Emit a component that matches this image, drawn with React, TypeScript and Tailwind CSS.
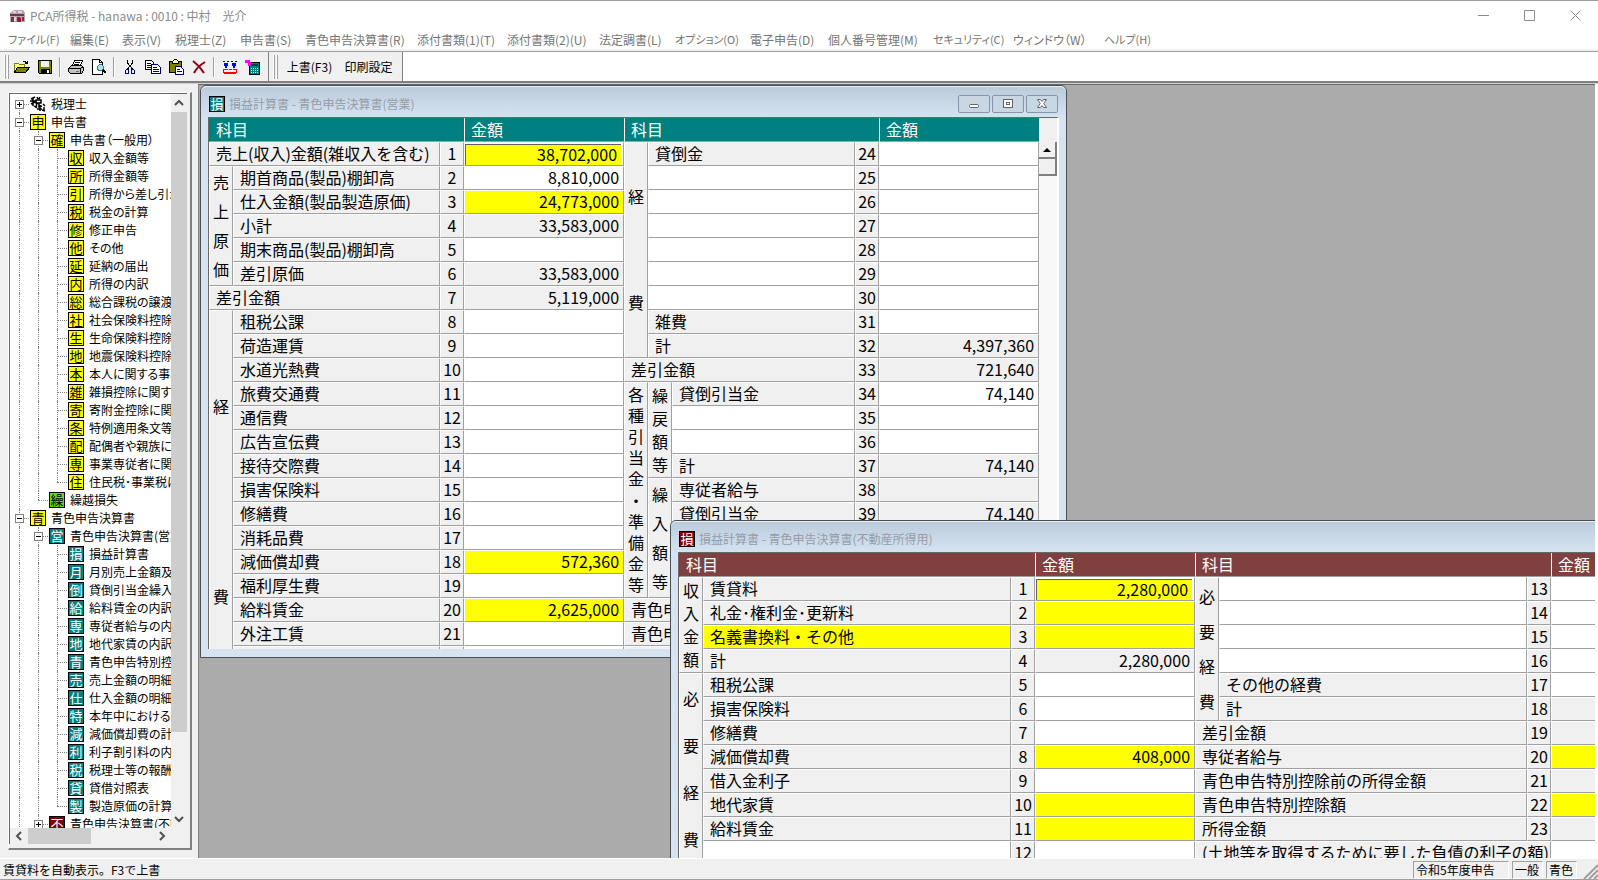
import type { ReactNode } from "react";

type Tone = "gray" | "white" | "yellow" | "edit";

type Line = {
  groups?: { text: string; rows: number }[];
  label?: string;
  labelTone?: Tone;
  span?: number;
  no?: number;
  amount?: string;
  tone?: Tone;
};

type TreeRow = {
  level: number;
  mark: string;
  label: string;
  color: string;
  node?: "+" | "-";
  last?: boolean;
};

const menus = [
  { label: "ファイル(F)", width: "w-[62px] text-[11px]" },
  { label: "編集(E)", width: "w-[52px]" },
  { label: "表示(V)", width: "w-[53px]" },
  { label: "税理士(Z)", width: "w-[65px]" },
  { label: "申告書(S)", width: "w-[65px]" },
  { label: "青色申告決算書(R)", width: "w-[112px]" },
  { label: "添付書類(1)(T)", width: "w-[90px]" },
  { label: "添付書類(2)(U)", width: "w-[92px]" },
  { label: "法定調書(L)", width: "w-[76px]" },
  { label: "オプション(O)", width: "w-[75px] text-[11px]" },
  { label: "電子申告(D)", width: "w-[78px]" },
  { label: "個人番号管理(M)", width: "w-[105px]" },
  { label: "セキュリティ(C)", width: "w-[80px] text-[11px]" },
  { label: "ウィンドウ（W）", width: "w-[91px]" },
  { label: "ヘルプ(H)", width: "w-[60px] text-[11px]" },
];

const yellow = "bg-[#ffff00] text-black";
const teal = "bg-[#008080] text-white";

const returnItems = [
  ["収", "収入金額等"],
  ["所", "所得金額等"],
  ["引", "所得から差し引かれる金額"],
  ["税", "税金の計算"],
  ["修", "修正申告"],
  ["他", "その他"],
  ["延", "延納の届出"],
  ["内", "所得の内訳"],
  ["総", "総合課税の譲渡"],
  ["社", "社会保険料控除"],
  ["生", "生命保険料控除"],
  ["地", "地震保険料控除"],
  ["本", "本人に関する事項"],
  ["雑", "雑損控除に関する事項"],
  ["寄", "寄附金控除に関する事項"],
  ["条", "特例適用条文等"],
  ["配", "配偶者や親族に関する事項"],
  ["専", "事業専従者に関する事項"],
  ["住", "住民税･事業税に関する事項"],
];

const statementItems = [
  ["損", "損益計算書"],
  ["月", "月別売上金額及び仕入金額"],
  ["倒", "貸倒引当金繰入額"],
  ["給", "給料賃金の内訳"],
  ["専", "専従者給与の内訳"],
  ["地", "地代家賃の内訳"],
  ["青", "青色申告特別控除"],
  ["売", "売上金額の明細"],
  ["仕", "仕入金額の明細"],
  ["特", "本年中における特殊事情"],
  ["減", "減価償却費の計算"],
  ["利", "利子割引料の内訳"],
  ["税", "税理士等の報酬"],
  ["貸", "貸借対照表"],
  ["製", "製造原価の計算"],
];

const tree: TreeRow[] = [
  { level: 0, mark: "", label: "税理士", color: "", node: "+" },
  { level: 0, mark: "申", label: "申告書", color: yellow, node: "-" },
  { level: 1, mark: "確", label: "申告書（一般用）", color: yellow, node: "-" },
  ...returnItems.map(([mark, label], i) => ({
    level: 2, mark, label, color: yellow, last: i === returnItems.length - 1,
  })),
  { level: 1, mark: "繰", label: "繰越損失", color: "bg-[#66e000] text-black", last: true },
  { level: 0, mark: "青", label: "青色申告決算書", color: yellow, node: "-" },
  { level: 1, mark: "営", label: "青色申告決算書(営業)", color: teal, node: "-" },
  ...statementItems.map(([mark, label], i) => ({
    level: 2, mark, label, color: teal, last: i === statementItems.length - 1,
  })),
  { level: 1, mark: "不", label: "青色申告決算書(不動産)", color: "bg-[#800000] text-white", node: "+" },
];

const businessRows: [Line, Line][] = [
  [
    { label: "売上(収入)金額(雑収入を含む)", span: 2, no: 1, amount: "38,702,000", tone: "edit" },
    { groups: [{ text: "経費", rows: 9 }], label: "貸倒金", span: 2, no: 24, tone: "white" },
  ],
  [
    { groups: [{ text: "売上原価", rows: 5 }], label: "期首商品(製品)棚卸高", no: 2, amount: "8,810,000", tone: "white" },
    { labelTone: "white", span: 2, no: 25, tone: "white" },
  ],
  [
    { label: "仕入金額(製品製造原価)", no: 3, amount: "24,773,000", tone: "yellow" },
    { labelTone: "white", span: 2, no: 26, tone: "white" },
  ],
  [
    { label: "小計", no: 4, amount: "33,583,000" },
    { labelTone: "white", span: 2, no: 27, tone: "white" },
  ],
  [
    { label: "期末商品(製品)棚卸高", no: 5, tone: "white" },
    { labelTone: "white", span: 2, no: 28, tone: "white" },
  ],
  [
    { label: "差引原価", no: 6, amount: "33,583,000" },
    { labelTone: "white", span: 2, no: 29, tone: "white" },
  ],
  [
    { label: "差引金額", span: 2, no: 7, amount: "5,119,000" },
    { labelTone: "white", span: 2, no: 30, tone: "white" },
  ],
  [
    { groups: [{ text: "経費", rows: 16 }], label: "租税公課", no: 8, tone: "white" },
    { label: "雑費", span: 2, no: 31, tone: "white" },
  ],
  [
    { label: "荷造運賃", no: 9, tone: "white" },
    { label: "計", span: 2, no: 32, amount: "4,397,360" },
  ],
  [
    { label: "水道光熱費", no: 10, tone: "white" },
    { label: "差引金額", span: 3, no: 33, amount: "721,640" },
  ],
  [
    { label: "旅費交通費", no: 11, tone: "white" },
    {
      groups: [{ text: "各種引当金・準備金等", rows: 9 }, { text: "繰戻額等", rows: 4 }],
      label: "貸倒引当金", no: 34, amount: "74,140", tone: "white",
    },
  ],
  [
    { label: "通信費", no: 12, tone: "white" },
    { labelTone: "white", no: 35, tone: "white" },
  ],
  [
    { label: "広告宣伝費", no: 13, tone: "white" },
    { labelTone: "white", no: 36, tone: "white" },
  ],
  [
    { label: "接待交際費", no: 14, tone: "white" },
    { label: "計", no: 37, amount: "74,140" },
  ],
  [
    { label: "損害保険料", no: 15, tone: "white" },
    { groups: [{ text: "繰入額等", rows: 5 }], label: "専従者給与", no: 38 },
  ],
  [
    { label: "修繕費", no: 16, tone: "white" },
    { label: "貸倒引当金", no: 39, amount: "74,140" },
  ],
  [
    { label: "消耗品費", no: 17, tone: "white" },
    { labelTone: "white", no: 40, tone: "white" },
  ],
  [
    { label: "減価償却費", no: 18, amount: "572,360", tone: "yellow" },
    { labelTone: "white", no: 41, tone: "white" },
  ],
  [
    { label: "福利厚生費", no: 19, tone: "white" },
    { label: "計", no: 42 },
  ],
  [
    { label: "給料賃金", no: 20, amount: "2,625,000", tone: "yellow" },
    { label: "青色申告特別控除前の所得金額", span: 3, no: 43 },
  ],
  [
    { label: "外注工賃", no: 21, tone: "white" },
    { label: "青色申告特別控除額", span: 3, no: 44 },
  ],
  [
    { no: 22, tone: "white" },
    { span: 3, no: 45 },
  ],
  [
    { no: 23, tone: "white" },
    { span: 4 },
  ],
];

const estateRows: [Line, Line][] = [
  [
    { groups: [{ text: "収入金額", rows: 4 }], label: "賃貸料", no: 1, amount: "2,280,000", tone: "edit" },
    { groups: [{ text: "必要経費", rows: 6 }], labelTone: "white", no: 13, tone: "white" },
  ],
  [
    { label: "礼金･権利金･更新料", no: 2, tone: "yellow" },
    { labelTone: "white", no: 14, tone: "white" },
  ],
  [
    { label: "名義書換料・その他", labelTone: "yellow", no: 3, tone: "yellow" },
    { labelTone: "white", no: 15, tone: "white" },
  ],
  [
    { label: "計", no: 4, amount: "2,280,000" },
    { labelTone: "white", no: 16, tone: "white" },
  ],
  [
    { groups: [{ text: "必要経費", rows: 8 }], label: "租税公課", no: 5, tone: "white" },
    { label: "その他の経費", no: 17, tone: "white" },
  ],
  [
    { label: "損害保険料", no: 6, tone: "white" },
    { label: "計", no: 18 },
  ],
  [
    { label: "修繕費", no: 7, tone: "white" },
    { label: "差引金額", span: 2, no: 19 },
  ],
  [
    { label: "減価償却費", no: 8, amount: "408,000", tone: "yellow" },
    { label: "専従者給与", span: 2, no: 20, tone: "yellow" },
  ],
  [
    { label: "借入金利子", no: 9, tone: "white" },
    { label: "青色申告特別控除前の所得金額", span: 2, no: 21 },
  ],
  [
    { label: "地代家賃", no: 10, tone: "yellow" },
    { label: "青色申告特別控除額", span: 2, no: 22, tone: "yellow" },
  ],
  [
    { label: "給料賃金", no: 11, tone: "yellow" },
    { label: "所得金額", span: 2, no: 23 },
  ],
  [
    { labelTone: "white", no: 12, tone: "white" },
    { label: "(土地等を取得するために要した負債の利子の額)", span: 3, tone: "white" },
  ],
];

const toneClass: Record<Tone, string> = {
  gray: "bg-[#f0f0f0]",
  white: "bg-white",
  yellow: "bg-[#ffff00]",
  edit: "bg-white",
};

const cell = "h-6 border-t border-l border-r border-b border-t-white border-l-white border-r-[#a0a0a0] border-b-[#a0a0a0] p-0 whitespace-nowrap";

function LineCells({ line }: { line: Line }) {
  const tone = line.tone ?? "gray";
  return (
    <>
      {line.groups?.map((g) => (
        <td key={g.text} rowSpan={g.rows} className={`${cell} h-px bg-[#f0f0f0] pb-0.5`}>
          <div className="flex h-full flex-col items-center justify-around leading-4">
            {[...g.text].map((c, i) => (
              <span key={i}>{c}</span>
            ))}
          </div>
        </td>
      ))}
      <td colSpan={line.span ?? 1} className={`${cell} overflow-hidden pb-0.5 pl-1.5 ${toneClass[line.labelTone ?? "gray"]}`}>
        {line.label}
      </td>
      {line.no !== undefined && <td className={`${cell} bg-[#f0f0f0] pb-0.5 text-center`}>{line.no}</td>}
      <td className={`${cell} text-right ${toneClass[tone]} ${tone === "edit" ? "" : "pr-1 pb-0.5"}`}>
        {tone === "edit" ? (
          <input
            aria-label={line.label}
            defaultValue={line.amount}
            className="block h-[21px] w-[156px] border-t border-l border-[#606060] bg-[#ffff00] pr-1 pb-0.5 text-right leading-4 outline-none"
          />
        ) : (
          line.amount
        )}
      </td>
    </>
  );
}

function Ledger({ cols, spans, headClass, rows, width }: {
  cols: string[];
  spans: [number, number];
  headClass: string;
  rows: [Line, Line][];
  width: string;
}) {
  const th = "h-6 border-b border-l border-b-[#a0a0a0] p-0 pb-0.5 pl-1.5 text-left font-normal text-white";
  return (
    <table className={`shrink-0 table-fixed border-separate border-spacing-0 text-base leading-5 ${width}`}>
      <colgroup>
        {cols.map((c, i) => (
          <col key={i} className={c} />
        ))}
      </colgroup>
      <thead>
        <tr className={headClass}>
          <th colSpan={spans[0]} className={`${th} border-l-transparent`}>科目</th>
          <th className={`${th} border-l-white`}>金額</th>
          <th colSpan={spans[1]} className={`${th} border-l-white`}>科目</th>
          <th className={`${th} border-l-white`}>金額</th>
        </tr>
      </thead>
      <tbody>
        {rows.map(([left, right], i) => (
          <tr key={i}>
            <LineCells line={left} />
            <LineCells line={right} />
          </tr>
        ))}
      </tbody>
    </table>
  );
}

function Mark({ text, color }: { text: string; color: string }) {
  return (
    <span className={`flex size-4 shrink-0 items-center justify-center overflow-hidden border border-black pb-px text-[13px] leading-none ${color}`}>
      {text}
    </span>
  );
}

function ChildWindow({ place, title, mark, markColor, children }: {
  place: string;
  title: string;
  mark: string;
  markColor: string;
  children: ReactNode;
}) {
  const button = "flex h-[18px] w-8 items-center justify-center rounded-xs border border-[#8695ab] bg-[#c9d6e4]";
  return (
    <section className={`absolute flex flex-col rounded-t-md border border-[#4a4f57] bg-[#d6e4f1] px-[7px] pb-2 ${place}`}>
      <header className="-mx-[7px] flex h-[31px] shrink-0 items-center rounded-t-md border-t border-[#e8eff6] bg-linear-to-b from-[#bccbdb] to-[#d5e3f1] px-2 pt-[3px]">
        <Mark text={mark} color={markColor} />
        <h2 className="ml-1 flex-1 text-xs text-[#949da8]">{title}</h2>
        <div className="flex gap-0.5">
          <button aria-label="最小化" className={button}>
            <svg width="12" height="12" fill="#fff" stroke="#60646e"><rect x="1.5" y="6.5" width="9" height="3" rx="1" /></svg>
          </button>
          <button aria-label="最大化" className={button}>
            <svg width="12" height="12" fill="#fff" stroke="#60646e"><rect x="1.5" y="1.5" width="9" height="8" /><rect x="4.5" y="4.5" width="3" height="2" /></svg>
          </button>
          <button aria-label="閉じる" className={button}>
            <svg width="12" height="12" fill="#fff" stroke="#60646e"><path d="M1.5 1.5h3L6 3.500l1.500-2h3L7.700 5.500l2.800 4h-3L6 7.500l-1.500 2h-3l2.800-4z" /></svg>
          </button>
        </div>
      </header>
      <div className="flex min-h-0 flex-1 items-start overflow-hidden border-t border-l border-r-2 border-t-[#696969] border-l-[#696969] border-r-white bg-white">
        {children}
      </div>
    </section>
  );
}

function TreeItem({ row }: { row: TreeRow }) {
  const first = row.label === "税理士";
  return (
    <li className="flex h-[18px] items-center whitespace-nowrap">
      {Array.from({ length: row.level + 1 }, (_, i) => {
        const own = i === row.level;
        const line = own && row.last ? "top-0 h-[9px]" : own && first ? "top-[9px] h-[9px]" : "top-0 h-[18px]";
        return (
          <span key={i} className="relative h-[18px] w-[19px] shrink-0">
            <span className={`absolute left-[9px] border-l border-dotted border-[#808080] ${line}`} />
            {own && <span className="absolute top-[9px] left-[9px] w-2.5 border-t border-dotted border-[#808080]" />}
            {own && row.node && (
              <svg className="absolute top-[5px] left-[5px]" width="9" height="9" stroke="#808080" fill="#fff">
                <rect x=".5" y=".5" width="8" height="8" />
                <path stroke="#000" d={row.node === "+" ? "M2 4.500h5M4.500 2v5" : "M2 4.500h5"} />
              </svg>
            )}
          </span>
        );
      })}
      <span className="ml-px">
        {row.mark ? (
          <Mark text={row.mark} color={row.color} />
        ) : (
          <svg width="16" height="16" fill="none" stroke="#000" strokeWidth="1.5">
            <path d="M1 3l4-2M0 5h6M3 2v8M1 8l4-2M7 1l1 2M10 1L9 3M6 4h5v3H6zM7 7l-1 4M9 7v3h2M4 10l3 2M8 11l4-1M7 13h5M10 9v6M13 8l2 2M12 14l3 1M14 11v3" />
          </svg>
        )}
      </span>
      <span className="ml-[5px]">{row.label}</span>
    </li>
  );
}

function Chevron({ d }: { d: string }) {
  return (
    <svg width="10" height="10" viewBox="0 0 10 10" fill="none" stroke="#505050" strokeWidth="2">
      <path d={d} />
    </svg>
  );
}

function Sidebar() {
  return (
    <aside className="flex w-[199px] shrink-0 flex-col border-r border-[#808080] bg-[#f0f0f0] pt-2 pr-[6px] pb-2 pl-2">
      <div className="flex min-h-0 flex-1 flex-col border border-t-white border-r-2 border-r-[#808080] border-b-2 border-b-[#808080] border-l-white pr-[3px] pb-1">
        <div className="flex min-h-0 flex-1 flex-col border-t border-l border-[#696969]">
          <div className="flex min-h-0 flex-1">
            <ul className="min-w-0 flex-1 overflow-hidden bg-white pt-px text-xs [font-feature-settings:'palt']">
              {tree.map((row, i) => (
                <TreeItem key={i} row={row} />
              ))}
            </ul>
            <div className="flex w-4 flex-col bg-[#f0f0f0]">
              <button aria-label="上へ" className="flex h-[18px] items-center justify-center"><Chevron d="M1 7l4-4 4 4" /></button>
              <div className="h-[620px] bg-[#cdcdcd]" />
              <button aria-label="下へ" className="mt-auto flex h-[18px] items-center justify-center"><Chevron d="M1 3l4 4 4-4" /></button>
            </div>
          </div>
          <div className="flex h-4 items-stretch pr-4">
            <button aria-label="左へ" className="flex w-[18px] items-center justify-center"><Chevron d="M7 1L3 5l4 4" /></button>
            <div className="w-[63px] bg-[#cdcdcd]" />
            <button aria-label="右へ" className="ml-auto flex w-[18px] items-center justify-center"><Chevron d="M3 1l4 4-4 4" /></button>
          </div>
        </div>
      </div>
    </aside>
  );
}

function Tool({ label, children }: { label: string; children: ReactNode }) {
  return (
    <button aria-label={label} className="flex h-6 w-[23px] items-center justify-center">
      <svg width="16" height="16" viewBox="0 0 16 16" fill="none" stroke="#000" shapeRendering="crispEdges">
        {children}
      </svg>
    </button>
  );
}

function Grip() {
  return (
    <span className="flex h-6 gap-px">
      <span className="w-0.5 border-r border-[#a0a0a0] bg-white" />
      <span className="w-0.5 border-r border-[#a0a0a0] bg-white" />
    </span>
  );
}

function Toolbar() {
  const separator = <span className="mx-[3px] h-5 w-0.5 shrink-0 border-l border-[#a0a0a0] bg-white" />;
  return (
    <div className="flex h-8 items-stretch border-t border-b-2 border-t-[#a0a0a0] border-b-[#808080] bg-white text-xs text-black">
      <div className="flex w-[269px] items-center border-r border-[#808080] bg-[#f0f0f0] pl-1">
        <Grip />
        <span className="w-px" />
        <Tool label="開く">
          <path fill="#ffff80" stroke="#808000" d="M.5 13.500v-9h4l1 1h5v3" />
          <path fill="#808000" d="M.5 13.500l3-5h12l-4 5z" />
          <path d="M9 2.500h2l2 2M13.500 1.500v3h-3" />
        </Tool>
        <Tool label="保存">
          <path fill="#808000" d="M1.500 1.500h13v13h-12l-1-1z" />
          <path fill="#f0f0f0" stroke="none" d="M4 2h8v6H4z" />
          <path fill="#000" stroke="none" d="M4 10h9v5H4z" />
          <path fill="#fff" stroke="none" d="M10 11h2v3h-2z" />
        </Tool>
        {separator}
        <Tool label="印刷">
          <path fill="#fff" d="M4.500 6.500l2-5h8l-2 5" />
          <path d="M7 3.500h5M6 5.500h5" />
          <path fill="#c0c0c0" d="M.5 9.500l3-3h10l2 2v3l-2 3h-11l-2-2zM.5 9.500h12v5M12.500 9.500l3-2" />
          <path stroke="#808000" d="M8 12.500h3" />
        </Tool>
        <Tool label="プレビュー">
          <path fill="#fff" d="M1.500.5h7l3 3v12h-10zM8.500.5v3h3" />
          <circle cx="9.500" cy="8.500" r="3" fill="#a0e8f0" stroke="#507080" />
          <path strokeWidth="2" d="M12 11l3 3" />
        </Tool>
        {separator}
        <Tool label="切り取り">
          <path d="M5.500 1v3l5 6M10.500 1v3l-5 6" />
          <path stroke="#000080" d="M4.500 10.500h2v4h-3v-3zM9.500 10.500h2l1 1v3h-3z" />
        </Tool>
        <Tool label="コピー">
          <path fill="#fff" d="M.5 1.500h6l2 2v7h-8zM2 4.500h4M2 6.500h5M2 8.500h5" />
          <path fill="#fff" stroke="#000080" d="M6.500 5.500h6l3 3v6h-9zM8 8.500h4M8 10.500h6M8 12.500h6" />
        </Tool>
        <Tool label="貼り付け">
          <path fill="#808000" d="M1.500 2.500h12v11h-12z" />
          <path fill="#ffff80" d="M4.500 4.500v-2l2-2h2l2 2v2z" />
          <path fill="#fff" stroke="#000080" d="M7.500 7.500h5l3 3v5h-8zM9 10.500h3M9 12.500h5" />
        </Tool>
        <Tool label="削除">
          <path stroke="#900010" strokeWidth="2" shapeRendering="auto" d="M2 2c4 3 8 7 11 12M14 3C9 6 5 10 3 14" />
        </Tool>
        {separator}
        <Tool label="検証">
          <path fill="#0000ff" stroke="none" d="M2 4h4v3H5v2H3V7H2zM10 4h4v3h-1v2h-2V7h-1z" />
          <path stroke="#0000c0" d="M1 2.500h2M5 2.500h2M9 2.500h2M13 2.500h2" />
          <path stroke="#ff0000" d="M1 10.500h5M7 10.500h3M11 10.500h4M1.500 10v4M14.500 10v4" />
          <path stroke="#ff0000" strokeWidth="2" d="M2 14h12" />
        </Tool>
        <Tool label="電卓">
          <path fill="#008080" d="M4.500 3.500h10v12h-10z" />
          <path fill="#004040" stroke="none" d="M6 5h7v2H6z" />
          <path stroke="#80ffff" strokeDasharray="1 1" d="M6 9.500h7M6 11.500h7M6 13.500h7" />
          <path fill="#ff00ff" stroke="none" d="M0 1h5v2h1v3H5v1H3V4H0z" />
        </Tool>
      </div>
      <div className="flex w-[134px] items-center border-r border-[#808080] bg-[#f0f0f0] pl-1">
        <Grip />
        <button className="ml-1.5 w-[51px] whitespace-nowrap">上書(F3)</button>
        <button className="ml-2 w-[51px] whitespace-nowrap">印刷設定</button>
      </div>
    </div>
  );
}

function StatusBar() {
  const pane = "border border-t-[#a0a0a0] border-r-white border-b-white border-l-[#a0a0a0] pl-0.5 leading-4 whitespace-nowrap";
  return (
    <footer className="flex h-[22px] shrink-0 items-center gap-[3px] border-t border-b border-t-white border-b-[#a0a0a0] bg-[#f0f0f0] pt-0.5 pl-[3px] text-xs text-black">
      <p className="flex-1">賃貸料を自動表示。F3で上書</p>
      <span className={`${pane} w-[96px]`}>令和5年度申告</span>
      <span className={`${pane} w-[31px]`}>一般</span>
      <span className={`${pane} w-[31px]`}>青色</span>
      <svg width="18" height="18" stroke="#a0a0a0" strokeWidth="2">
        <path d="M4 18L18 4M9 18l9-9M14 18l4-4" />
      </svg>
    </footer>
  );
}

export default function App() {
  return (
    <div className="flex h-screen flex-col overflow-hidden border-t border-[#a0a0a0] bg-white font-['Noto_Sans_CJK_JP',sans-serif] text-black">
      <header className="flex h-[29px] shrink-0 items-center pl-[9px] text-[#8c8c8c]">
        <svg width="16" height="14" viewBox="0 0 16 14">
          <path fill="#b9a3ad" d="M1 4l4-3h9l2 3v9H1z" />
          <path fill="#6b3a4c" d="M1 5h14v2H1zM2 8h3v5H2zM8 8h3v5H8zM13 8h2v4h-2z" />
          <path fill="#d8d8e8" d="M4 2h3v2H4zM9 2h4v2H9zM5 8h2v4H5z" />
          <path fill="#a01030" d="M9 9h3v4H9z" />
        </svg>
        <h1 className="ml-[5px] flex-1 text-xs whitespace-pre">PCA所得税 - hanawa : 0010 : 中村　光介</h1>
        <button aria-label="最小化" className="flex h-full w-[46px] items-center justify-center">
          <svg width="11" height="11" stroke="#8c8c8c"><path d="M0 5.500h11" /></svg>
        </button>
        <button aria-label="最大化" className="flex h-full w-[46px] items-center justify-center">
          <svg width="11" height="11" stroke="#8c8c8c" fill="none"><path d="M.5.5h10v10H.5z" /></svg>
        </button>
        <button aria-label="閉じる" className="flex h-full w-[46px] items-center justify-center">
          <svg width="11" height="11" stroke="#8c8c8c"><path d="M.5.5l10 10M10.500.5l-10 10" /></svg>
        </button>
      </header>
      <nav className="flex h-[21px] shrink-0 items-center border-b-2 border-[#f0f0f0] pl-2 text-xs text-[#757575] [font-feature-settings:'palt']">
        {menus.map((m) => (
          <button key={m.label} className={`shrink-0 text-left whitespace-nowrap ${m.width}`}>
            {m.label}
          </button>
        ))}
      </nav>
      <Toolbar />
      <div className="flex min-h-0 flex-1 border-t border-[#d0d0d0]">
        <Sidebar />
        <main className="relative mr-[3px] min-w-0 flex-1 overflow-hidden border-t border-[#696969] bg-[#ababab]">
          <ChildWindow
            place="top-0 left-px h-[573px] w-[867px]"
            title="損益計算書 - 青色申告決算書(営業)"
            mark="損"
            markColor={teal}
          >
            <Ledger
              cols={["w-6", "w-[207px]", "w-6", "w-[160px]", "w-6", "w-6", "w-[183px]", "w-6", "w-[160px]"]}
              spans={[3, 4]}
              headClass="bg-[#008080]"
              rows={businessRows}
              width="w-[830px]"
            />
            <div className="flex flex-1 flex-col self-stretch bg-[#f8f8f8]">
              <div className="h-6 bg-[#f0f0f0]" />
              <button aria-label="上へスクロール" className="flex h-[17px] items-center justify-center border-r-2 border-b-2 border-[#808080] bg-[#f0f0f0]">
                <svg width="8" height="4"><path d="M0 4l4-4 4 4z" /></svg>
              </button>
              <div className="h-[17px] border-r-2 border-b-2 border-[#808080] bg-[#f0f0f0]" />
            </div>
          </ChildWindow>
          <ChildWindow
            place="top-[435px] left-[471px] h-[572px] w-[1068px]"
            title="損益計算書 - 青色申告決算書(不動産所得用)"
            mark="損"
            markColor="bg-[#800000] text-white"
          >
            <Ledger
              cols={["w-6", "w-[308px]", "w-6", "w-[160px]", "w-6", "w-[308px]", "w-6", "w-[160px]"]}
              spans={[3, 3]}
              headClass="bg-[#804040]"
              rows={estateRows}
              width="w-[1032px]"
            />
          </ChildWindow>
        </main>
      </div>
      <StatusBar />
    </div>
  );
}
